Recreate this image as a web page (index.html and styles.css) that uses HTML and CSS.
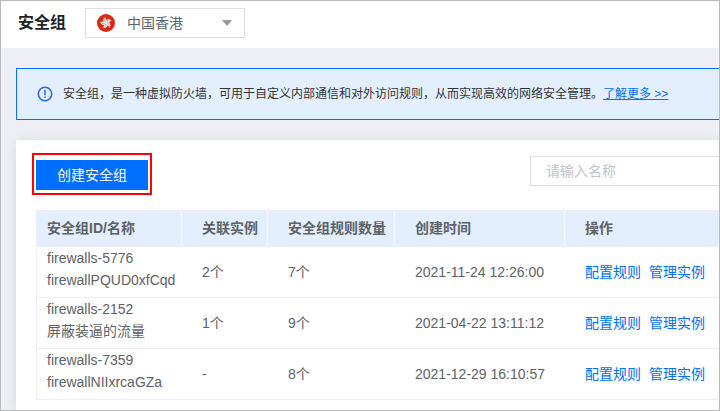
FILE: index.html
```html
<!DOCTYPE html>
<html lang="zh-CN">
<head>
    <meta charset="UTF-8">
    <meta name="viewport" content="width=device-width, initial-scale=1.0">
    <title>安全组</title>
    <link rel="stylesheet" href="styles.css">
</head>
<body>
    <header class="header">
        <h1>安全组</h1>
        <div class="region">
            <svg class="region-flag" viewBox="0 0 18 18" aria-hidden="true">
                <circle cx="9" cy="9" r="9" fill="#de2910"/>
                <g fill="#fff" transform="rotate(-12 9 9)">
                    <g id="petal">
                        <path d="M9 9C5.6 7.6 6 4.2 9.8 3.2C8.9 5 11.1 6.4 9 9Z"/>
                        <path d="M9 8C8 7 7.8 6 8.4 5" fill="none" stroke="#de2910" stroke-width="0.5"/>
                    </g>
                    <use href="#petal" transform="rotate(72 9 9)"/>
                    <use href="#petal" transform="rotate(144 9 9)"/>
                    <use href="#petal" transform="rotate(216 9 9)"/>
                    <use href="#petal" transform="rotate(288 9 9)"/>
                </g>
            </svg>
            <select class="region-select" aria-label="地域">
                <option>中国香港</option>
            </select>
            <svg class="region-arrow" viewBox="0 0 10 6" aria-hidden="true">
                <path d="M0 0h10L5 6z" fill="#999"/>
            </svg>
        </div>
    </header>

    <main class="main">
        <div class="notice">
            <svg class="notice-icon" viewBox="0 0 16 16" fill="none" stroke="#2468f2" aria-hidden="true">
                <circle cx="8" cy="8" r="6.7" stroke-width="1.5"/>
                <path d="M8 3.8v5.4M8 10.4v1.6" stroke-width="1.5"/>
            </svg>
            <p>安全组，是一种虚拟防火墙，可用于自定义内部通信和对外访问规则，从而实现高效的网络安全管理。<a href="#">了解更多 &gt;&gt;</a></p>
        </div>

        <section class="card">
            <div class="toolbar">
                <div class="highlight">
                    <button type="button" class="create-btn">创建安全组</button>
                </div>
                <input type="text" class="search" placeholder="请输入名称" aria-label="名称">
            </div>

            <table class="table">
                <colgroup>
                    <col class="col-name">
                    <col class="col-instance">
                    <col class="col-rules">
                    <col class="col-time">
                    <col>
                </colgroup>
                <thead>
                    <tr>
                        <th>安全组ID/名称</th>
                        <th>关联实例</th>
                        <th>安全组规则数量</th>
                        <th>创建时间</th>
                        <th>操作</th>
                    </tr>
                </thead>
                <tbody>
                    <tr>
                        <td class="name">firewalls-5776<br>firewallPQUD0xfCqd</td>
                        <td>2个</td>
                        <td>7个</td>
                        <td>2021-11-24 12:26:00</td>
                        <td class="actions"><a href="#">配置规则</a><a href="#">管理实例</a></td>
                    </tr>
                    <tr>
                        <td class="name">firewalls-2152<br>屏蔽装逼的流量</td>
                        <td>1个</td>
                        <td>9个</td>
                        <td>2021-04-22 13:11:12</td>
                        <td class="actions"><a href="#">配置规则</a><a href="#">管理实例</a></td>
                    </tr>
                    <tr>
                        <td class="name">firewalls-7359<br>firewallNIIxrcaGZa</td>
                        <td>-</td>
                        <td>8个</td>
                        <td>2021-12-29 16:10:57</td>
                        <td class="actions"><a href="#">配置规则</a><a href="#">管理实例</a></td>
                    </tr>
                </tbody>
            </table>
        </section>
    </main>
</body>
</html>
```
FILE: styles.css
```css
* {
    box-sizing: border-box;
}
body {
    display: flex;
    flex-direction: column;
    min-height: 100vh;
    margin: 0;
    border: 1px solid #bbb;
    background: #eeeff5;
    color: #606266;
    font-family: "Liberation Sans", Arial, "Noto Sans CJK SC", sans-serif;
    font-size: 14px;
    line-height: 22px;
}
a {
    color: #006eff;
    text-decoration: none;
}
h1, p {
    margin: 0;
}

/* 顶部栏 */
.header {
    display: flex;
    align-items: center;
    gap: 19px;
    padding: 7px 17px 10px;
    background: #fff;
}
.header h1 {
    color: #222;
    font-size: 16px;
}
.region {
    display: flex;
    align-items: center;
    width: 160px;
    height: 30px;
    padding: 0 12px 0 11px;
    border: 1px solid #dcdfe6;
}
.region-flag {
    flex: none;
    width: 18px;
    height: 18px;
    margin-right: 12px;
}
.region-select {
    flex: 1;
    min-width: 0;
    height: 28px;
    padding: 0;
    border: none;
    background: none;
    color: #606266;
    font: inherit;
    appearance: none;
}
.region-arrow {
    flex: none;
    width: 10px;
    height: 6px;
    pointer-events: none;
}

/* 提示 */
.main {
    display: flex;
    flex: 1;
    flex-direction: column;
    gap: 20px;
    padding: 20px 0 0 15px;
    overflow: hidden;
}
.notice {
    display: flex;
    align-items: center;
    gap: 10px;
    padding: 14px 20px;
    border: 1px solid #006eff;
    border-right: none;
    background: #e3efff;
    color: #333;
    font-size: 12px;
}
.notice-icon {
    flex: none;
    width: 16px;
    height: 16px;
}
.notice a {
    text-decoration: underline;
}

/* 列表 */
.card {
    flex: 1;
    padding: 13px 0 10px 20px;
    background: #fff;
    box-shadow: 0 2px 12px rgba(0, 0, 0, 0.1);
}
.toolbar {
    display: flex;
    justify-content: space-between;
    align-items: flex-start;
    margin-bottom: 15px;
}
.highlight {
    margin-left: -4px;
    padding: 5px 2px 3px;
    border: 2px solid #f00;
}
.create-btn {
    display: block;
    width: 112px;
    height: 30px;
    padding: 0;
    border: none;
    background: #006eff;
    color: #fff;
    font: inherit;
    cursor: pointer;
}
.search {
    width: 189px;
    height: 30px;
    margin-top: 3px;
    padding: 0 15px;
    border: 1px solid #dcdfe6;
    border-right: none;
    color: #606266;
    font: inherit;
}
.search::placeholder {
    color: #c0c4cc;
}
.table {
    width: 100%;
    border-top: 1px solid #ebeef5;
    border-left: 1px solid #ebeef5;
    border-spacing: 0;
    table-layout: fixed;
}
.col-name {
    width: 145px;
}
.col-instance {
    width: 86px;
}
.col-rules {
    width: 127px;
}
.col-time {
    width: 170px;
}
.table th,
.table td {
    padding: 0 0 0 20px;
    text-align: left;
    white-space: nowrap;
}
.table th {
    height: 36px;
    padding-bottom: 2px;
    border-right: 1px solid #fff;
    border-bottom: 1px solid #ebeef5;
    background: #e3efff;
}
.table th:last-child {
    border-right: none;
}
.table th:first-child {
    padding-left: 10px;
}
.table td {
    height: 51px;
    border-bottom: 1px solid #ebeef5;
}
.table .name {
    padding: 0 0 6px 10px;
}
.actions a + a {
    margin-left: 8px;
}
```
